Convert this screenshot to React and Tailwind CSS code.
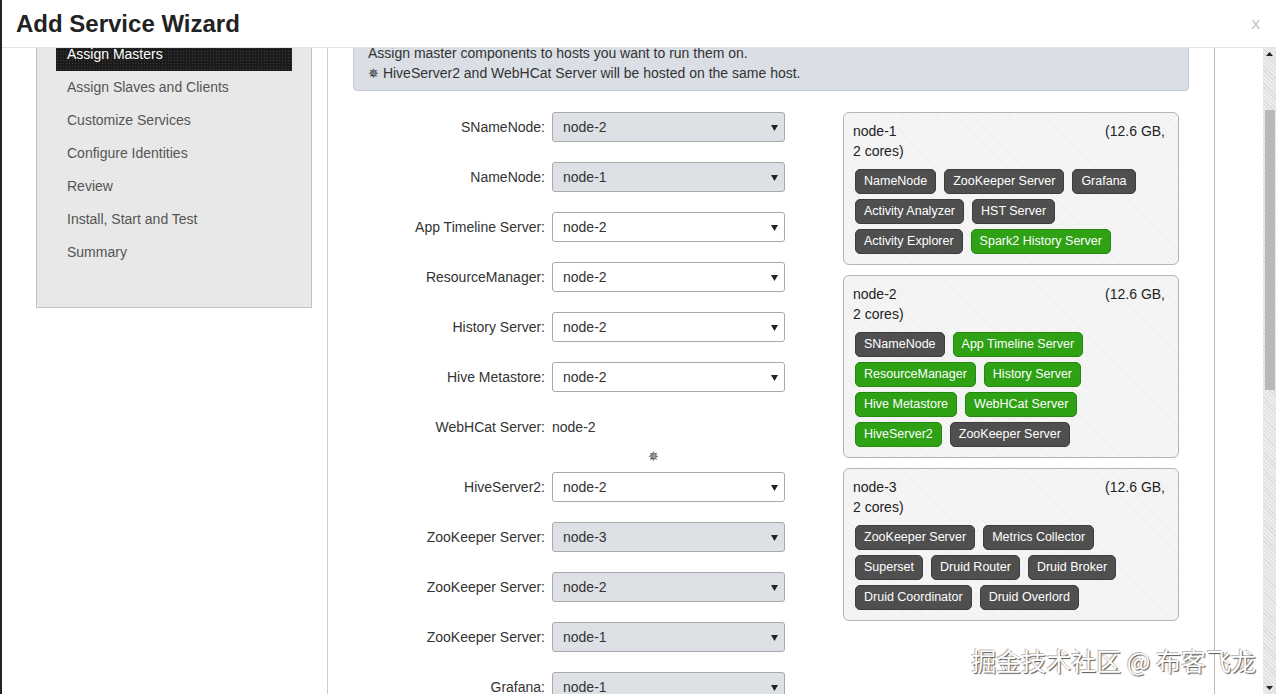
import React from "react";

const font = { fontFamily: '"Liberation Sans", Arial, sans-serif' };

const steps = [
  "Assign Masters",
  "Assign Slaves and Clients",
  "Customize Services",
  "Configure Identities",
  "Review",
  "Install, Start and Test",
  "Summary",
];

const rows = [
  { label: "SNameNode:", value: "node-2", gray: true },
  { label: "NameNode:", value: "node-1", gray: true },
  { label: "App Timeline Server:", value: "node-2" },
  { label: "ResourceManager:", value: "node-2" },
  { label: "History Server:", value: "node-2" },
  { label: "Hive Metastore:", value: "node-2" },
  { label: "WebHCat Server:", value: "node-2", text: true },
  { label: "HiveServer2:", value: "node-2" },
  { label: "ZooKeeper Server:", value: "node-3", gray: true },
  { label: "ZooKeeper Server:", value: "node-2", gray: true },
  { label: "ZooKeeper Server:", value: "node-1", gray: true },
  { label: "Grafana:", value: "node-1", gray: true },
];

const hosts = [
  {
    name: "node-1",
    rows: [
      [["NameNode"], ["ZooKeeper Server"], ["Grafana"]],
      [["Activity Analyzer"], ["HST Server"]],
      [["Activity Explorer"], ["Spark2 History Server", true]],
    ],
  },
  {
    name: "node-2",
    rows: [
      [["SNameNode"], ["App Timeline Server", true]],
      [["ResourceManager", true], ["History Server", true]],
      [["Hive Metastore", true], ["WebHCat Server", true]],
      [["HiveServer2", true], ["ZooKeeper Server"]],
    ],
  },
  {
    name: "node-3",
    rows: [
      [["ZooKeeper Server"], ["Metrics Collector"]],
      [["Superset"], ["Druid Router"], ["Druid Broker"]],
      [["Druid Coordinator"], ["Druid Overlord"]],
    ],
  },
];

function Select({ value, gray }) {
  return (
    <div
      className={`relative flex h-[30px] w-[233px] items-center rounded-[3px] border border-[#a9a9a9] pl-[10px] text-[14px] text-[#333] ${
        gray ? "bg-[#dde1e6]" : "bg-white"
      }`}
    >
      {value}
      <svg
        className="absolute right-[6px] top-[12px]"
        width="7"
        height="6"
        viewBox="0 0 7 6"
      >
        <path d="M0 0 L7 0 L3.5 6 Z" fill="#222" />
      </svg>
    </div>
  );
}

function Badge({ label, green }) {
  return (
    <div
      className={`flex h-[25px] items-center rounded-[5px] border px-[8px] text-[12.5px] text-white ${
        green
          ? "border-[#24880e] bg-[#2ea114]"
          : "border-[#3d3d3d] bg-[#4f4f4f]"
      }`}
    >
      {label}
    </div>
  );
}

function HostPanel({ host }) {
  return (
    <div className="rounded-[6px] border border-[#b5b5b5] bg-[#f3f3f3] pb-[10px] pl-[11px] pr-[13px] pt-[8px] [background-image:repeating-linear-gradient(45deg,#efefef_0px,#efefef_1px,#f6f6f6_1px,#f6f6f6_3px)]">
      <div className="text-[14px] leading-[20px] text-[#222]">
        <div className="-ml-[2px] flex justify-between">
          <span>{host.name}</span>
          <span>(12.6 GB,</span>
        </div>
        <div className="-ml-[2px]">2 cores)</div>
      </div>
      <div className="mt-[8px] flex flex-col gap-[5px]">
        {host.rows.map((r, i) => (
          <div key={i} className="flex gap-[8px]">
            {r.map(([l, g], j) => (
              <Badge key={j} label={l} green={g} />
            ))}
          </div>
        ))}
      </div>
    </div>
  );
}

export default function App() {
  return (
    <div
      className="relative flex h-[694px] w-[1276px] flex-col overflow-hidden border-l-2 border-[#222] bg-white"
      style={font}
    >
      {/* Header */}
      <div className="z-10 flex h-[48px] shrink-0 items-center justify-between border-b border-[#e2e2e2] bg-white pl-[14px] pr-[16px]">
        <h1 className="text-[24px] font-bold text-[#222]">Add Service Wizard</h1>
        <span className="text-[17px] text-[#c4c4c4]">x</span>
      </div>

      <div className="flex min-h-0 flex-1">
        <div className="flex min-h-0 flex-1 overflow-hidden">
          {/* Sidebar */}
          <div className="w-[326px] shrink-0 border-r border-[#cfcfcf] pl-[34px] pr-[15px]">
            <div className="-mt-[11px] border border-[#c3c3c3] bg-[#e8e8e8] px-[19px] pb-[38px]">
              {steps.map((s, i) => (
                <div
                  key={s}
                  className={`flex h-[33px] items-center pl-[11px] text-[14px] ${
                    i === 0
                      ? "bg-[#1c1c1c] text-white [background-image:radial-gradient(#3a3a3a_0.6px,transparent_0.8px)] [background-size:3px_3px]"
                      : "text-[#555]"
                  }`}
                >
                  {s}
                </div>
              ))}
            </div>
          </div>

          {/* Main */}
          <div className="w-[887px] shrink-0 border-r border-[#bdbdbd] px-[25px]">
            <div className="-mt-[11px] rounded-b-[4px] border border-[#c5cad0] bg-[#dadfe5] px-[14px] pb-[6px] pt-[5px] text-[14px] leading-[20px] text-[#333]">
              <div>Assign master components to hosts you want to run them on.</div>
              <div>
                <span className="text-[13px]">✵</span> HiveServer2 and WebHCat
                Server will be hosted on the same host.
              </div>
            </div>

            <div className="mt-[21px] flex">
              <div className="flex w-[432px] shrink-0 flex-col">
                {rows.map((r, i) => (
                  <React.Fragment key={i}>
                    <div
                      className={`flex h-[30px] items-center ${
                        r.text ? "" : "mb-[20px]"
                      }`}
                    >
                      <div className="w-[192px] text-right text-[14px] text-[#333]">
                        {r.label}
                      </div>
                      <div className="ml-[7px]">
                        {r.text ? (
                          <span className="text-[14px] text-[#333]">
                            {r.value}
                          </span>
                        ) : (
                          <Select value={r.value} gray={r.gray} />
                        )}
                      </div>
                    </div>
                    {r.text && (
                      <div className="flex h-[30px] items-center pl-[295px] text-[13px] text-[#444]">
                        ✵
                      </div>
                    )}
                  </React.Fragment>
                ))}
              </div>

              <div className="ml-[58px] flex w-[336px] shrink-0 flex-col gap-[10px]">
                {hosts.map((h) => (
                  <HostPanel key={h.name} host={h} />
                ))}
              </div>
            </div>
          </div>
          <div className="flex-1" />
        </div>

        {/* Scrollbar */}
        <div className="relative w-[13px] shrink-0 bg-[#e4e4e4] [background-image:repeating-linear-gradient(45deg,#dcdcdc_0px,#dcdcdc_1px,#ececec_1px,#ececec_3px)]">
          <svg className="absolute left-[3px] top-[4px]" width="7" height="4" viewBox="0 0 7 4">
            <path d="M0 4 L7 4 L3.5 0 Z" fill="#222" />
          </svg>
          <div className="absolute left-[2px] top-[62px] h-[280px] w-[10px] bg-[#b9b9b9]" />
          <svg className="absolute bottom-[4px] left-[3px]" width="7" height="4" viewBox="0 0 7 4">
            <path d="M0 0 L7 0 L3.5 4 Z" fill="#222" />
          </svg>
        </div>
      </div>

      {/* Watermark */}
      <div
        className="absolute bottom-[18px] right-[20px] text-[25px] leading-[32px] text-white [text-shadow:1px_1px_1px_#555,-1px_-1px_0_#bbb]"
        style={{ fontFamily: '"Noto Sans CJK SC", "Liberation Sans", sans-serif' }}
      >
        掘金技术社区 @ 布客飞龙
      </div>
    </div>
  );
}
